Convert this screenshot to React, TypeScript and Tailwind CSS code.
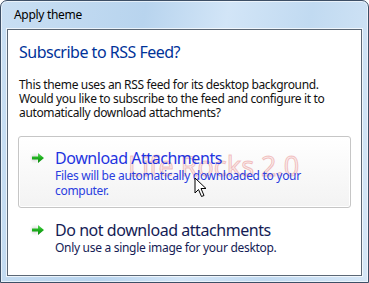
import { FC } from "react"

const font = "font-['Segoe_UI','Noto_Sans','Liberation_Sans',sans-serif]"

const GreenArrow: FC = () => (
  <svg width="16" height="12" viewBox="0 0 16 12" className="shrink-0">
    <defs>
      <linearGradient id="ga" x1="0" y1="0" x2="0" y2="1">
        <stop offset="0" stopColor="#5fdc5f" />
        <stop offset="0.5" stopColor="#1cae1c" />
        <stop offset="1" stopColor="#0d8a10" />
      </linearGradient>
      <radialGradient id="gs" cx="0.4" cy="0.5" r="0.6">
        <stop offset="0" stopColor="#c8c8c8" />
        <stop offset="1" stopColor="#ffffff" stopOpacity="0" />
      </radialGradient>
    </defs>
    <ellipse cx="6" cy="6" rx="6" ry="6" fill="url(#gs)" />
    <path d="M2 4.5 H8 V1 L14 6 L8 11 V7.5 H2 Z" fill="url(#ga)" />
  </svg>
)

const Cursor: FC = () => (
  <svg width="14" height="21" viewBox="0 0 14 21" className="absolute left-[193px] top-[176px] z-20">
    <path
      d="M1 1 V16 L4.5 12.5 L7.5 19.5 L10 18.5 L7 11.5 H12 Z"
      fill="#fff"
      stroke="#000"
      strokeWidth="1"
      strokeLinejoin="miter"
    />
  </svg>
)

interface CommandLinkProps {
  title: string
  desc: string
  hot?: boolean
}

const CommandLink: FC<CommandLinkProps> = ({ title, desc, hot }) => (
  <div
    className={
      hot
        ? "flex gap-[9px] rounded-[3px] border border-[#c6c6c6] bg-[linear-gradient(#ffffff,#f3f3f3)] pl-[11px] pr-2 pt-[11px] pb-[9px] shadow-[inset_0_0_0_1px_#ffffff]"
        : "flex gap-[9px] rounded-[3px] border border-transparent pl-[11px] pr-2 pt-[11px] pb-[9px]"
    }
  >
    <div className="pt-[4px]">
      <GreenArrow />
    </div>
    <div className="relative z-10 flex flex-col">
      <div
        className={`text-[16px] leading-[20px] tracking-[-0.45px] ${hot ? "text-[#1f34e0]" : "text-[#151c55]"}`}
      >
        {title}
      </div>
      <div
        className={`text-[12px] leading-[15px] tracking-[-0.3px] w-[252px] ${hot ? "text-[#2a3de0]" : "text-[#151c55]"}`}
      >
        {desc}
      </div>
    </div>
  </div>
)

export default function App() {
  return (
    <div className={`w-[369px] h-[283px] bg-white ${font}`}>
      <div className="relative w-[369px] h-[283px] rounded-t-[7px] border border-[#3d4f66] bg-[linear-gradient(100deg,#c9dff3_0%,#b8d4ee_35%,#d2e5f7_55%,#c1daf1_75%,#d6e7f7_100%)] px-[6px] pb-[6px] pt-0 shadow-[inset_0_0_0_1px_rgba(255,255,255,0.6)]">
        <div className="h-[28px] pl-[7px] pt-[6px] text-[12px] leading-[16px] tracking-[-0.3px] text-black">
          Apply theme
        </div>
        <div className="relative h-[247px] border border-[#5b6775] bg-white px-[10px] shadow-[0_0_0_1px_rgba(255,255,255,0.7)]">
          <div className="pl-px pt-[12px] text-[16px] leading-[20px] tracking-[-0.5px] text-[#003399]">
            Subscribe to RSS Feed?
          </div>
          <div className="mt-[16px] pl-px text-[12px] leading-[14px] tracking-[-0.35px] text-[#111]">
            This theme uses an RSS feed for its desktop background.
            <br />
            Would you like to subscribe to the feed and configure it to
            <br />
            automatically download attachments?
          </div>
          <div className="relative mt-[16px] flex flex-col">
            <CommandLink
              hot
              title="Download Attachments"
              desc="Files will be automatically downloaded to your computer."
            />
            <CommandLink title="Do not download attachments" desc="Only use a single image for your desktop." />
            {/* watermark */}
            <div className="pointer-events-none absolute left-[110px] top-[15px] text-[27px] leading-[30px] text-[rgba(235,120,120,0.12)] [-webkit-text-stroke:1px_rgba(225,90,90,0.35)]">
              Life Rocks 2.0
            </div>
          </div>
        </div>
        <Cursor />
      </div>
    </div>
  )
}
